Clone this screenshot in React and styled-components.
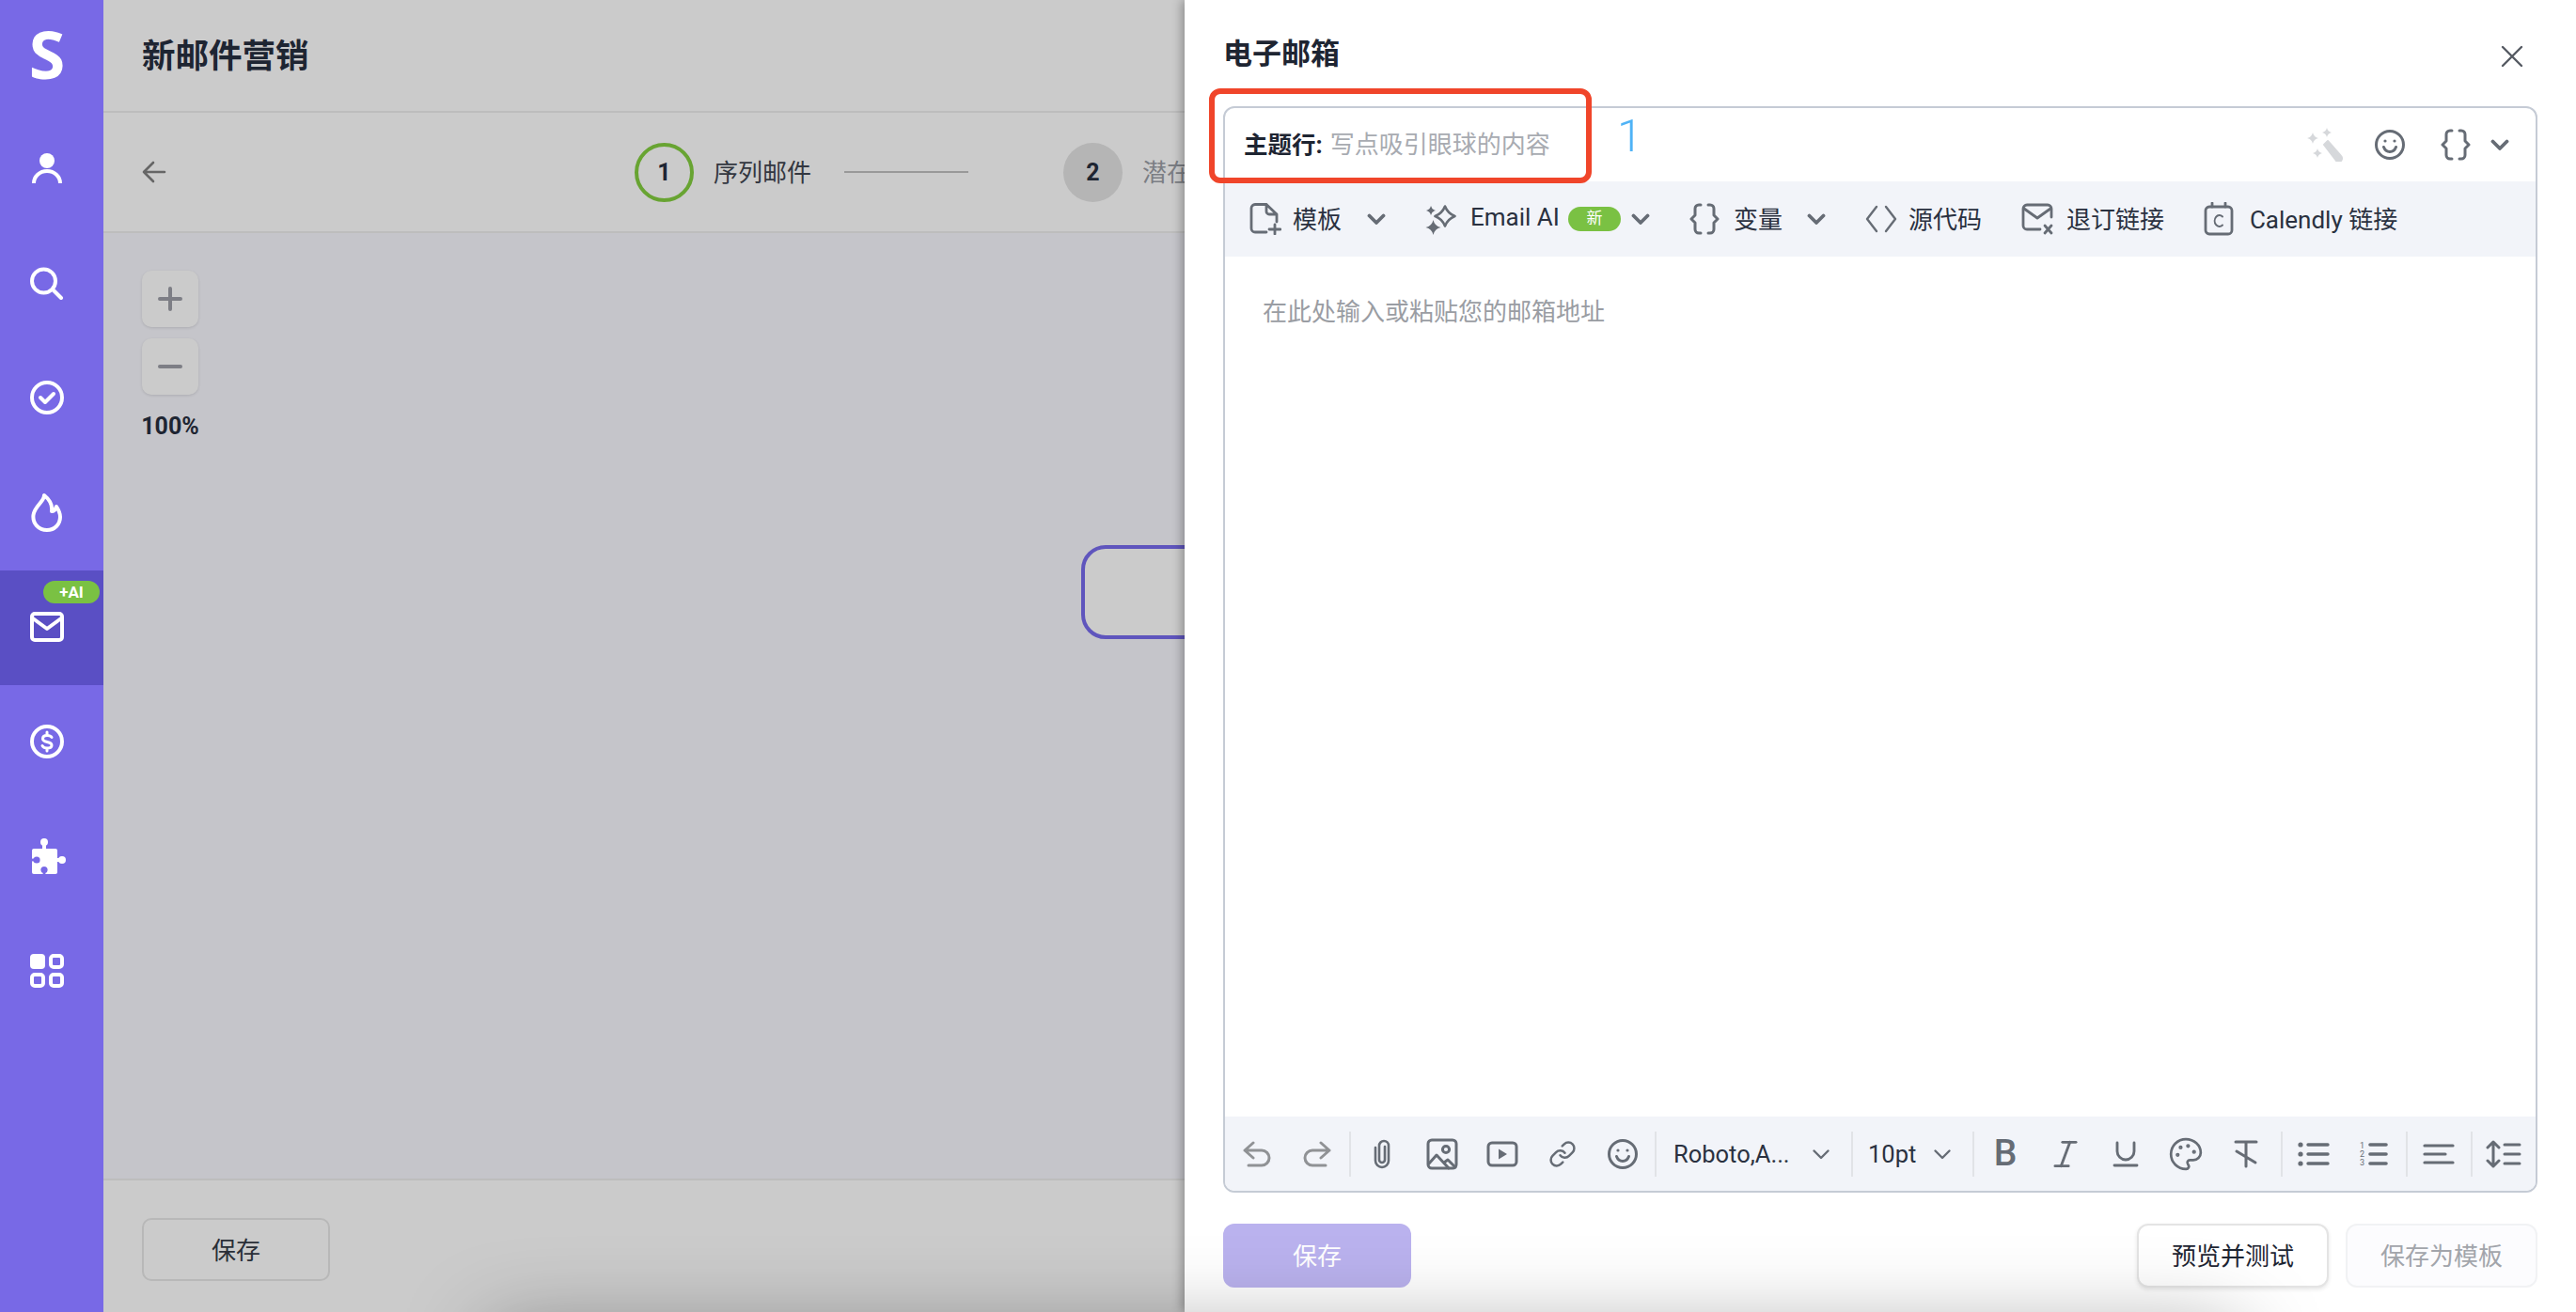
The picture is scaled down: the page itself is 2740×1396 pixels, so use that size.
import React from "react";
import styled, { createGlobalStyle } from "styled-components";
import { Italic, Link, Palette, Underline } from "lucide-react";

const GlobalStyle = createGlobalStyle`
  html, body {
    margin: 0;
    padding: 0;
    background: #fff;
  }
  * {
    box-sizing: border-box;
  }
  body {
    font-family: Roboto, "Noto Sans CJK SC", sans-serif;
    color: #1e2532;
  }
`;

const Page = styled.div`
  position: relative;
  width: 2740px;
  height: 1396px;
  overflow: hidden;
  display: flex;
`;

/* sidebar */
const Sidebar = styled.nav`
  width: 110px;
  flex: none;
  background: #7869e6;
  color: #fff;
  display: flex;
  flex-direction: column;
`;

const Logo = styled.div`
  height: 119px;
  padding: 0 10px 6px 0;
  display: flex;
  align-items: center;
  justify-content: center;
  font: 700 70px/1 "Open Sans", sans-serif;
`;

const NavItem = styled.div`
  position: relative;
  height: 122px;
  padding: 0 10px 3px 0;
  display: flex;
  align-items: center;
  justify-content: center;
  background: ${(p) => (p.$active ? "#5a4fc4" : "transparent")};
`;

const AiBadge = styled.span`
  position: absolute;
  top: 11px;
  right: 4px;
  width: 60px;
  height: 24px;
  border-radius: 12px;
  background: #7ac143;
  color: #fff;
  font-size: 17px;
  font-weight: 700;
  line-height: 24px;
  text-align: center;
`;

/* page behind the drawer */
const Main = styled.main`
  flex: 1;
  display: flex;
  flex-direction: column;
  background: #cbcbcb;
`;

const Header = styled.header`
  height: 120px;
  flex: none;
  padding: 0 41px 6px;
  display: flex;
  align-items: center;
  border-bottom: 2px solid #bdbdbd;
`;

const Title = styled.h1`
  margin: 0;
  font-size: 35.5px;
  font-weight: 700;
  color: #1e2532;
`;

const StepBar = styled.div`
  height: 128px;
  flex: none;
  padding-left: 41px;
  display: flex;
  align-items: center;
  border-bottom: 2px solid #bdbdbd;
`;

const BackIcon = styled.svg`
  width: 26px;
  height: 24px;
  margin-right: 498px;
  color: #666;
`;

const StepDot = styled.span`
  width: 63px;
  height: 63px;
  flex: none;
  border-radius: 50%;
  display: flex;
  align-items: center;
  justify-content: center;
  font-size: 25px;
  font-weight: 700;
  border: ${(p) => (p.$current ? "4px solid #68a432" : "none")};
  background: ${(p) => (p.$current ? "transparent" : "#b5b5b5")};
`;

const StepLabel = styled.span`
  margin-left: 21px;
  padding-bottom: 3px;
  font-size: 26px;
  white-space: nowrap;
  color: ${(p) => (p.$muted ? "#7b7e84" : "#333740")};
`;

const StepLine = styled.span`
  width: 132px;
  height: 2px;
  flex: none;
  margin: 0 101px 0 35px;
  background: #999;
`;

const Canvas = styled.section`
  position: relative;
  flex: 1;
  background: #c5c5ca;
  padding: 40px 0 0 40px;
`;

const ZoomGroup = styled.div`
  width: 62px;
  display: flex;
  flex-direction: column;
  align-items: center;
  gap: 12px;
`;

const ZoomButton = styled.div`
  width: 60px;
  height: 60px;
  border-radius: 10px;
  background: #cbcbcb;
  box-shadow: 0 1px 3px rgba(0, 0, 0, 0.12);
  display: flex;
  align-items: center;
  justify-content: center;
  color: #7d7e85;
`;

const ZoomValue = styled.div`
  margin-top: 4px;
  font-size: 25px;
  font-weight: 700;
  line-height: 36px;
`;

const FlowNode = styled.div`
  position: absolute;
  left: 1040px;
  top: 332px;
  width: 320px;
  height: 100px;
  border: 4px solid #5f55bd;
  border-radius: 26px;
  background: #cbcbcb;
`;

const Footer = styled.footer`
  height: 142px;
  flex: none;
  padding: 40px 0 0 41px;
  border-top: 2px solid #bdbdbd;
`;

const GhostButton = styled.div`
  width: 200px;
  height: 67px;
  padding-bottom: 3px;
  border: 2px solid #b8b8b8;
  border-radius: 10px;
  display: flex;
  align-items: center;
  justify-content: center;
  font-size: 26px;
  color: #2a2f38;
`;

/* drawer */
const Drawer = styled.aside`
  position: absolute;
  top: 0;
  right: 0;
  bottom: 0;
  width: 1480px;
  padding: 0 41px;
  background: #fff;
  box-shadow: -3px 0 10px rgba(0, 0, 0, 0.3);
  display: flex;
  flex-direction: column;
`;

const DrawerHead = styled.div`
  height: 113px;
  flex: none;
  padding: 0 15px 4px 0;
  display: flex;
  align-items: center;
  justify-content: space-between;
  svg {
    margin-top: 10px;
  }
`;

const DrawerTitle = styled.h2`
  margin: 0;
  font-size: 31px;
  font-weight: 700;
`;

const Editor = styled.div`
  height: 1156px;
  flex: none;
  border: 2px solid #c5cbd5;
  border-radius: 12px;
  overflow: hidden;
  display: flex;
  flex-direction: column;
`;

const SubjectRow = styled.div`
  height: 78px;
  flex: none;
  padding: 0 28px 0 20px;
  display: flex;
  align-items: center;
`;

const SubjectLabel = styled.strong`
  padding-bottom: 5px;
  font-size: 25.5px;
  font-weight: 700;
`;

const SubjectHint = styled.span`
  margin-left: 8px;
  padding-bottom: 5px;
  font-size: 26px;
  color: #a8abb1;
`;

const SubjectIcons = styled.div`
  margin-left: auto;
  display: flex;
  align-items: center;
  color: #666c75;
`;

const SmileSlot = styled.span`
  display: flex;
  margin: 0 38px 0 34px;
`;

const ToolRow = styled.div`
  height: 80px;
  flex: none;
  padding-left: 26px;
  background: #f2f4f9;
  display: flex;
  align-items: center;
  gap: 42px;
  color: #666c75;
`;

const Tool = styled.div`
  display: flex;
  align-items: center;
`;

const ToolLabel = styled.span`
  margin-left: ${(p) => p.$gap || 15}px;
  padding-bottom: 4px;
  font-size: 26px;
  color: #2a3140;
  white-space: nowrap;
`;

const NewBadge = styled.span`
  margin-left: 9px;
  width: 56px;
  height: 26px;
  border-radius: 13px;
  background: #7ac143;
  color: #fff;
  font-size: 17px;
  line-height: 25px;
  text-align: center;
`;

const Caret = styled.svg`
  flex: none;
  width: 20px;
  height: 12px;
  margin-left: ${(p) => p.$gap || 0}px;
  fill: none;
  stroke: currentColor;
  stroke-width: ${(p) => (p.$thin ? 2.4 : 3.8)};
  stroke-linecap: round;
  stroke-linejoin: round;
`;

const EditorBody = styled.div`
  flex: 1;
  padding: 42px 0 0 40px;
  font-size: 26px;
  line-height: 34px;
  color: #9a9da3;
`;

const BottomBar = styled.div`
  height: 79px;
  flex: none;
  padding-left: 2px;
  background: #f2f4f9;
  display: flex;
  align-items: center;
  color: #666c75;
`;

const Cell = styled.div`
  width: 64px;
  height: 48px;
  flex: none;
  display: flex;
  align-items: center;
  justify-content: center;
  color: ${(p) => (p.$dim ? "#909295" : "inherit")};
`;

const BoldGlyph = styled.span`
  font-size: 39px;
  font-weight: 500;
  line-height: 1;
`;

const Sep = styled.span`
  width: 2px;
  height: 48px;
  flex: none;
  margin: 0 1px 0 ${(p) => p.$left || 2}px;
  background: #e1e3e7;
`;

const Select = styled.div`
  width: ${(p) => p.$w}px;
  flex: none;
  padding: 0 20px 0 ${(p) => p.$left}px;
  display: flex;
  align-items: center;
  justify-content: space-between;
  font-size: 25.5px;
  color: #2a3140;
  svg {
    color: #666c75;
  }
`;

const DrawerFooter = styled.div`
  padding-top: 33px;
  display: flex;
  align-items: flex-start;
  gap: 18px;
`;

const PrimaryButton = styled.div`
  width: 200px;
  height: 68px;
  margin-right: auto;
  padding-bottom: 3px;
  border-radius: 12px;
  background: #bab2ee;
  color: #fff;
  font-size: 26px;
  display: flex;
  align-items: center;
  justify-content: center;
`;

const OutlineButton = styled.div`
  width: 204px;
  height: 68px;
  padding-bottom: 3px;
  border-radius: 12px;
  border: 2px solid ${(p) => (p.$disabled ? "#f1f2f4" : "#e4e4e4")};
  background: ${(p) => (p.$disabled ? "#fcfcfe" : "#fff")};
  box-shadow: ${(p) => (p.$disabled ? "none" : "0 2px 4px rgba(0, 0, 0, 0.1)")};
  color: ${(p) => (p.$disabled ? "#a2a5ab" : "#1e2532")};
  font-size: 26px;
  display: flex;
  align-items: center;
  justify-content: center;
`;

/* annotations and overlays */
const RedMark = styled.div`
  position: absolute;
  left: 26px;
  top: 94px;
  width: 407px;
  height: 101px;
  border: 6px solid #f0452a;
  border-radius: 12px;
`;

const MarkNumber = styled.div`
  position: absolute;
  left: 460px;
  top: 117px;
  font-size: 49px;
  line-height: 56px;
  font-weight: 300;
  color: #4fb3f6;
`;

const BottomGlow = styled.div`
  position: absolute;
  left: 530px;
  right: 370px;
  top: 1425px;
  height: 200px;
  box-shadow: 0 0 90px 10px rgba(0, 0, 0, 0.34);
  pointer-events: none;
`;

/* icons */
const Ico = ({ w, h, sw = 3, fill = "none", children, ...rest }) => (
  <svg
    width={w}
    height={h}
    viewBox={`0 0 ${w} ${h}`}
    fill={fill}
    stroke="currentColor"
    strokeWidth={sw}
    strokeLinecap="round"
    strokeLinejoin="round"
    style={{ flex: "none" }}
    {...rest}
  >
    {children}
  </svg>
);

const star = (x, y, r, k = 0.12) =>
  `M${x} ${y - r}Q${x + r * k} ${y - r * k} ${x + r} ${y}Q${x + r * k} ${y + r * k} ${x} ${y + r}Q${x - r * k} ${y + r * k} ${x - r} ${y}Q${x - r * k} ${y - r * k} ${x} ${y - r}Z`;

const PersonIcon = () => (
  <Ico w={36} h={36} sw={4}>
    <circle cx="18" cy="10" r="8" fill="currentColor" stroke="none" />
    <path d="M4 34A14 13 0 0 1 32 34" strokeLinecap="butt" />
  </Ico>
);
const SearchIcon = () => (
  <Ico w={36} h={36} sw={4}>
    <circle cx="14.5" cy="16" r="12.5" />
    <path d="M25 26l8 8" />
  </Ico>
);
const CheckIcon = () => (
  <Ico w={36} h={36} sw={4}>
    <circle cx="18" cy="18" r="16" />
    <path d="M11 18l5 5 9-9" />
  </Ico>
);
const FlameIcon = () => (
  <Ico w={34} h={42} sw={4}>
    <path d="M14 3C14 10 4 14 2.5 24C1.5 33 8 40 17 40C25 40 31 34 31 26C31 21 29 18 27 15C26 18 24 20 22 20C23 13 19 7 14 3Z" />
  </Ico>
);
const MailIcon = () => (
  <Ico w={36} h={32} sw={4}>
    <rect x="2" y="2" width="32" height="28" rx="3" />
    <path d="M3 7l15 11L33 7" />
  </Ico>
);
const DollarIcon = () => (
  <Ico w={36} h={36} sw={4}>
    <circle cx="18" cy="18" r="16" />
    <path
      strokeWidth="3"
      d="M23 13.5C22 12 20 11.5 18 11.5C15 11.5 13.5 13 13.5 15C13.5 20 23 17 23 22C23 24 21 25 18 25C16 25 14 24 13 22.5M18 8v3.5M18 25v3"
    />
  </Ico>
);
const PuzzleIcon = () => (
  <svg width="40" height="38" viewBox="-4 0 40 38" style={{ flex: "none" }}>
    <rect x="0" y="11" width="27" height="27" rx="2" fill="#fff" />
    <circle cx="13" cy="4" r="4" fill="#fff" />
    <rect x="11" y="6" width="4" height="6" fill="#fff" />
    <circle cx="32" cy="23" r="4" fill="#fff" />
    <rect x="26" y="21" width="6" height="4" fill="#fff" />
    <circle cx="5" cy="23" r="3.6" fill="#7869e6" />
    <rect x="0" y="21.6" width="4" height="2.8" fill="#7869e6" />
    <circle cx="13" cy="33.5" r="3.6" fill="#7869e6" />
    <rect x="11.6" y="35" width="2.8" height="3" fill="#7869e6" />
  </svg>
);
const GridIcon = () => (
  <svg width="36" height="36" viewBox="0 0 36 36" fill="none" stroke="#fff" strokeWidth="4" style={{ flex: "none" }}>
    <rect x="0" y="0" width="16" height="16" rx="4" fill="#fff" stroke="none" />
    <rect x="22" y="2" width="12" height="12" rx="3" />
    <rect x="2" y="22" width="12" height="12" rx="3" />
    <rect x="22" y="22" width="12" height="12" rx="3" />
  </svg>
);
const PlusIcon = () => (
  <Ico w={26} h={26} sw={4}>
    <path d="M13 2v22M2 13h22" />
  </Ico>
);
const MinusIcon = () => (
  <Ico w={26} h={26} sw={4}>
    <path d="M2 13h22" />
  </Ico>
);
const CloseIcon = () => (
  <Ico w={24} h={24} sw={2.4} style={{ color: "#555a62", flex: "none" }}>
    <path d="M2 2l20 20M22 2L2 22" />
  </Ico>
);
const WandIcon = () => (
  <svg width="38" height="36" viewBox="0 0 38 36" fill="#d6d8db" style={{ flex: "none" }}>
    <path d={star(21, 5, 5, 0.18)} />
    <path d={star(6, 11, 6, 0.18)} />
    <path d={star(11, 27, 5, 0.18)} />
    <path d="M18 18l4-4 14 16a3 3 0 0 1-5 5z" stroke="#d6d8db" strokeWidth="2" strokeLinejoin="round" />
  </svg>
);
const SmileIcon = ({ sw = 3 }) => (
  <Ico w={32} h={32} sw={sw}>
    <circle cx="16" cy="16" r="14.5" />
    <path d="M9.5 18.5c1.5 4 4 5 6.5 5s5-1 6.5-5" />
    <circle cx="11" cy="12" r="1.6" fill="currentColor" stroke="none" />
    <circle cx="21" cy="12" r="1.6" fill="currentColor" stroke="none" />
  </Ico>
);
const BracesIcon = () => (
  <Ico w={32} h={34} sw={3}>
    <path d="M12 2h-2a4 4 0 0 0-4 4v7l-4 4 4 4v7a4 4 0 0 0 4 4h2M20 2h2a4 4 0 0 1 4 4v7l4 4-4 4v7a4 4 0 0 1-4 4h-2" />
  </Ico>
);
const Chevron = ({ thin, gap }) => (
  <Caret viewBox="0 0 20 12" $thin={thin} $gap={gap}>
    <path d="M2.5 2.5L10 10l7.5-7.5" />
  </Caret>
);
const DocIcon = () => (
  <Ico w={34} h={34} sw={2.8}>
    <path d="M18 1.5H6a4 4 0 0 0-4 4V27a4 4 0 0 0 4 4h12M18 1.5L29 12v8M18 1.5V9a3 3 0 0 0 3 3h8" />
    <path d="M27 23v10M21 28h12" />
  </Ico>
);
const SparkleIcon = () => (
  <svg width="33" height="33" viewBox="0 0 33 33" style={{ flex: "none" }}>
    <path d={star(21, 13, 10.5, 0.28)} fill="none" stroke="currentColor" strokeWidth="2.6" strokeLinejoin="round" />
    <path d={star(6, 7, 5, 0.18)} fill="currentColor" />
    <path d={star(8.5, 25, 8, 0.18)} fill="currentColor" />
  </svg>
);
const CodeIcon = () => (
  <Ico w={34} h={30} sw={2.4}>
    <path d="M12 2L2 15l10 13M22 2l10 13-10 13" />
  </Ico>
);
const MailXIcon = () => (
  <Ico w={34} h={34} sw={2.8}>
    <path d="M32 15V6a4 4 0 0 0-4-4H6a4 4 0 0 0-4 4v18a4 4 0 0 0 4 4h14" />
    <path d="M3 6l14 10L31 6" />
    <path d="M25 24l7 8M32 24l-7 8" />
  </Ico>
);
const CalendarIcon = () => (
  <Ico w={32} h={36} sw={2.8}>
    <rect x="2" y="5" width="28" height="29" rx="4" />
    <path d="M9 1v4M23 1v4" />
    <path strokeWidth="2" d="M20 15.5a5 6 0 1 0 0 9" />
  </Ico>
);
const UndoIcon = () => (
  <Ico w={30} h={28} sw={3}>
    <path d="M11 2L2 10l9 8M2 10h18a8 8 0 0 1 0 16H6" />
  </Ico>
);
const RedoIcon = () => (
  <Ico w={30} h={28} sw={3}>
    <path d="M19 2l9 8-9 8M28 10H10a8 8 0 0 0 0 16h14" />
  </Ico>
);
const ClipIcon = () => (
  <Ico w={20} h={32} sw={2.6}>
    <path d="M13 8v14a3 3 0 0 1-6 0V7a5 5 0 0 1 10 0v16a7 7 0 0 1-14 0V9" />
  </Ico>
);
const ImageIcon = () => (
  <Ico w={34} h={34} sw={3}>
    <rect x="2" y="2" width="30" height="30" rx="4" />
    <circle cx="21" cy="12" r="3.6" />
    <path d="M3 27l8-9 13 14M19 26l4-3 8 8" />
  </Ico>
);
const VideoIcon = () => (
  <Ico w={34} h={28} sw={3}>
    <rect x="2" y="2" width="30" height="24" rx="4" />
    <path d="M13 8.5l9 5.5-9 5.5z" fill="currentColor" stroke="none" />
  </Ico>
);
const ClearIcon = () => (
  <Ico w={26} h={30} sw={3}>
    <path d="M2 2h22M13 2v26M3 12l20 12" />
  </Ico>
);
const ListIcon = () => (
  <Ico w={34} h={26} sw={3.4}>
    <circle cx="3" cy="3" r="2.6" fill="currentColor" stroke="none" />
    <circle cx="3" cy="13" r="2.6" fill="currentColor" stroke="none" />
    <circle cx="3" cy="23" r="2.6" fill="currentColor" stroke="none" />
    <path d="M11 3h21M11 13h21M11 23h21" />
  </Ico>
);
const OrderedIcon = () => (
  <Ico w={30} h={30} sw={3.6}>
    <g fontSize="9" fontFamily="Roboto, sans-serif" fill="currentColor" stroke="none">
      <text x="0" y="9">1</text>
      <text x="0" y="18">2</text>
      <text x="0" y="27">3</text>
    </g>
    <path d="M11 5h17M11 15h17M11 25h17" />
  </Ico>
);
const AlignIcon = () => (
  <Ico w={34} h={24} sw={3.2}>
    <path d="M2 3h30M2 12h22M2 21h30" />
  </Ico>
);
const LineHeightIcon = () => (
  <Ico w={38} h={30} sw={3}>
    <path d="M8 2v26M2 8l6-6 6 6M2 22l6 6 6-6" />
    <path d="M20 5h16M20 15h16M20 25h16" />
  </Ico>
);

const navIcons = [
  { key: "person", icon: <PersonIcon /> },
  { key: "search", icon: <SearchIcon /> },
  { key: "tasks", icon: <CheckIcon /> },
  { key: "flame", icon: <FlameIcon /> },
  { key: "mail", icon: <MailIcon />, active: true },
  { key: "money", icon: <DollarIcon /> },
  { key: "puzzle", icon: <PuzzleIcon /> },
  { key: "apps", icon: <GridIcon /> },
];

export default function App() {
  return (
    <Page>
      <GlobalStyle />
      <Sidebar>
        <Logo>S</Logo>
        {navIcons.map((n) => (
          <NavItem key={n.key} $active={n.active}>
            {n.active && <AiBadge>+AI</AiBadge>}
            {n.icon}
          </NavItem>
        ))}
      </Sidebar>

      <Main>
        <Header>
          <Title>新邮件营销</Title>
        </Header>
        <StepBar>
          <BackIcon viewBox="0 0 26 24" fill="none" stroke="currentColor" strokeWidth="2.6" strokeLinecap="round" strokeLinejoin="round">
            <path d="M24 12H2M12 2L2 12l10 10" />
          </BackIcon>
          <StepDot $current>1</StepDot>
          <StepLabel>序列邮件</StepLabel>
          <StepLine />
          <StepDot>2</StepDot>
          <StepLabel $muted>潜在客户</StepLabel>
        </StepBar>
        <Canvas>
          <ZoomGroup>
            <ZoomButton>
              <PlusIcon />
            </ZoomButton>
            <ZoomButton>
              <MinusIcon />
            </ZoomButton>
            <ZoomValue>100%</ZoomValue>
          </ZoomGroup>
          <FlowNode />
        </Canvas>
        <Footer>
          <GhostButton>保存</GhostButton>
        </Footer>
      </Main>

      <Drawer>
        <DrawerHead>
          <DrawerTitle>电子邮箱</DrawerTitle>
          <CloseIcon />
        </DrawerHead>
        <Editor>
          <SubjectRow>
            <SubjectLabel>主题行:</SubjectLabel>
            <SubjectHint>写点吸引眼球的内容</SubjectHint>
            <SubjectIcons>
              <WandIcon />
              <SmileSlot>
                <SmileIcon />
              </SmileSlot>
              <Tool>
                <BracesIcon />
                <Chevron gap={21} />
              </Tool>
            </SubjectIcons>
          </SubjectRow>
          <ToolRow>
            <Tool>
              <DocIcon />
              <ToolLabel $gap={12}>模板</ToolLabel>
              <Chevron gap={27} />
            </Tool>
            <Tool>
              <SparkleIcon />
              <ToolLabel>Email AI</ToolLabel>
              <NewBadge>新</NewBadge>
              <Chevron gap={11} />
            </Tool>
            <Tool>
              <BracesIcon />
              <ToolLabel>变量</ToolLabel>
              <Chevron gap={26} />
            </Tool>
            <Tool>
              <CodeIcon />
              <ToolLabel $gap={12}>源代码</ToolLabel>
            </Tool>
            <Tool>
              <MailXIcon />
              <ToolLabel $gap={14}>退订链接</ToolLabel>
            </Tool>
            <Tool>
              <CalendarIcon />
              <ToolLabel $gap={17}>Calendly 链接</ToolLabel>
            </Tool>
          </ToolRow>
          <EditorBody>在此处输入或粘贴您的邮箱地址</EditorBody>
          <BottomBar>
            <Cell $dim><UndoIcon /></Cell>
            <Cell $dim><RedoIcon /></Cell>
            <Sep />
            <Cell><ClipIcon /></Cell>
            <Cell><ImageIcon /></Cell>
            <Cell><VideoIcon /></Cell>
            <Cell><Link size={30} strokeWidth={2} /></Cell>
            <Cell><SmileIcon /></Cell>
            <Sep />
            <Select $w={204} $left={17}>
              Roboto,A...
              <Chevron thin />
            </Select>
            <Sep />
            <Select $w={124} $left={15}>
              10pt
              <Chevron thin />
            </Select>
            <Sep />
            <Cell><BoldGlyph>B</BoldGlyph></Cell>
            <Cell><Italic size={38} strokeWidth={1.8} /></Cell>
            <Cell><Underline size={36} strokeWidth={1.9} /></Cell>
            <Cell><Palette size={38} strokeWidth={1.7} /></Cell>
            <Cell><ClearIcon /></Cell>
            <Sep $left={5} />
            <Cell><ListIcon /></Cell>
            <Cell><OrderedIcon /></Cell>
            <Sep />
            <Cell><AlignIcon /></Cell>
            <Sep />
            <Cell><LineHeightIcon /></Cell>
          </BottomBar>
        </Editor>
        <DrawerFooter>
          <PrimaryButton>保存</PrimaryButton>
          <OutlineButton>预览并测试</OutlineButton>
          <OutlineButton $disabled>保存为模板</OutlineButton>
        </DrawerFooter>
        <RedMark />
        <MarkNumber>1</MarkNumber>
      </Drawer>
      <BottomGlow />
    </Page>
  );
}
